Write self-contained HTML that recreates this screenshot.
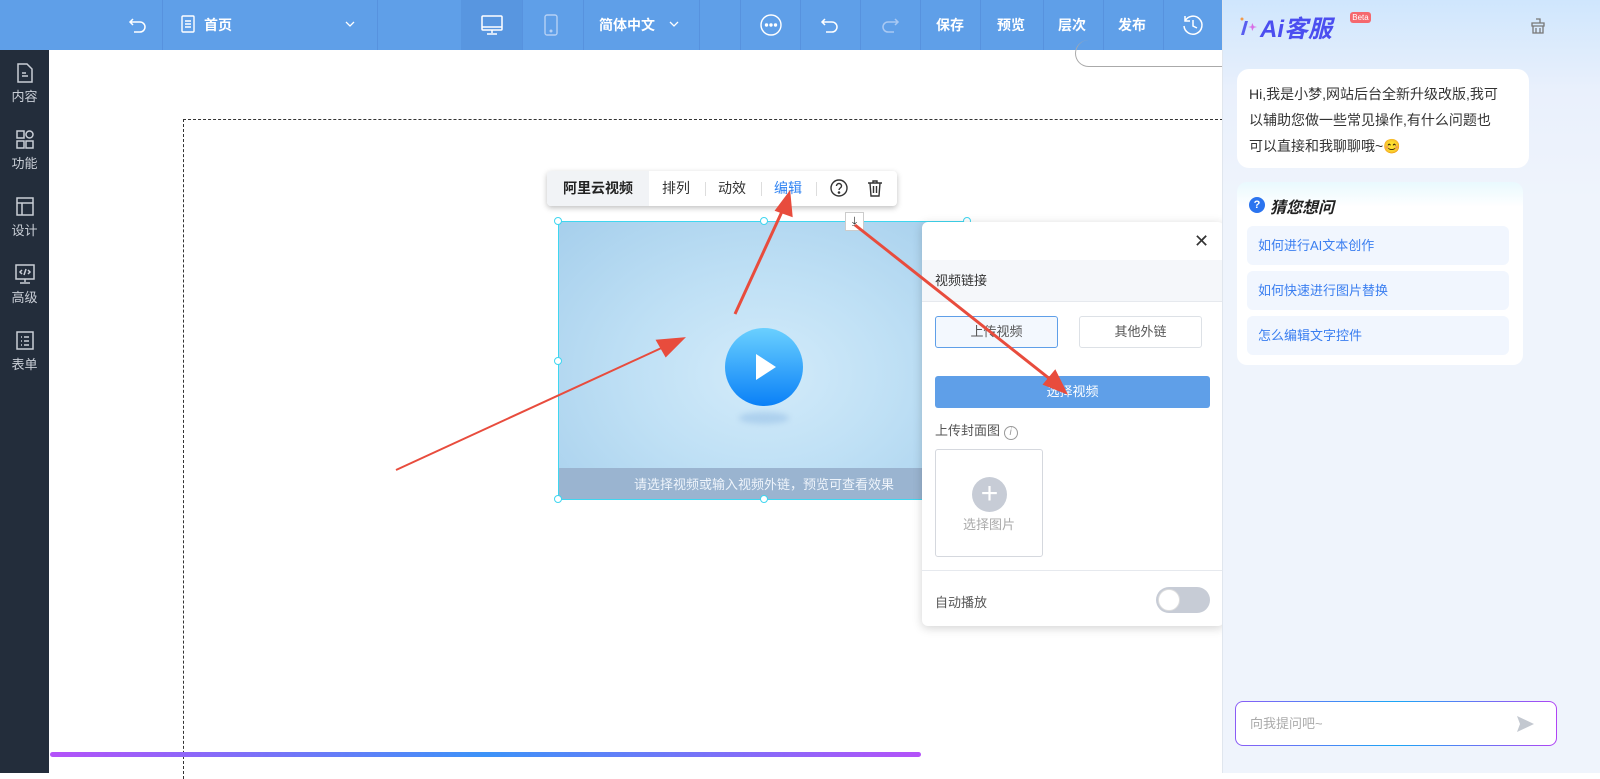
<!DOCTYPE html>
<html><head><meta charset="utf-8"><style>
*{box-sizing:border-box;margin:0;padding:0}
body{width:1600px;height:773px;overflow:hidden;position:relative;background:#fff;font-family:"Liberation Sans","Noto Sans CJK SC",sans-serif;font-size:14px;color:#333}
.abs{position:absolute}
.top{left:0;top:0;width:1222px;height:50px;background:#5f9fe8}
.div{position:absolute;top:0;width:1px;height:50px;background:#5792de}
.tt{position:absolute;top:0;height:50px;line-height:50px;color:#fff;font-size:14px;font-weight:bold}
.side{left:0;top:50px;width:49px;height:723px;background:#232d3b}
.si{position:absolute;left:0;width:49px;text-align:center;color:#c9ced6;font-size:13px}
.si svg{display:block;margin:0 auto 2px}
.right{left:1222px;top:0;width:378px;height:773px;background:linear-gradient(180deg,#cfe6fd 0,#e9f0fc 90px,#eff4fc 200px,#eff4fc 100%);border-left:1px solid #e0e6ee}
.q{position:absolute;left:1247px;width:262px;height:39px;background:#f1f6fe;border-radius:6px;color:#3a7ef0;font-size:13px;line-height:39px;padding-left:11px}
</style></head><body>
<div class="abs top">
 <div class="div" style="left:162px"></div><div class="div" style="left:377px"></div>
 <div class="abs" style="left:461px;top:0;width:61px;height:50px;background:#5896e0"></div>
 <div class="div" style="left:522px"></div><div class="div" style="left:583px"></div><div class="div" style="left:699px"></div><div class="div" style="left:740px"></div><div class="div" style="left:800px"></div><div class="div" style="left:860px"></div><div class="div" style="left:920px"></div><div class="div" style="left:980px"></div><div class="div" style="left:1043px"></div><div class="div" style="left:1103px"></div><div class="div" style="left:1163px"></div>
 <svg class="abs" style="left:128px;top:15px" width="20" height="20" viewBox="0 0 20 20" fill="none" stroke="#fff" stroke-width="1.5"><path d="M5 4 2 7l3 3M2 7h10a5 5 0 010 10H6"/></svg>
 <svg class="abs" style="left:180px;top:14px" width="16" height="20" viewBox="0 0 16 20" fill="none" stroke="#fff" stroke-width="1.4"><rect x="2" y="2" width="12" height="16" rx="1"/><path d="M5 7h6M5 10h6M5 13h6"/></svg>
 <div class="tt" style="left:204px">首页</div>
 <svg class="abs" style="left:344px;top:19px" width="12" height="10" viewBox="0 0 12 10" fill="none" stroke="#fff" stroke-width="1.3"><path d="M2 3l4 4 4-4"/></svg>
 <svg class="abs" style="left:480px;top:14px" width="24" height="22" viewBox="0 0 24 22" fill="none" stroke="#fff" stroke-width="1.5"><rect x="2" y="2" width="20" height="14" rx="1"/><path d="M2 13h20M12 16v3M7 20h10"/></svg>
 <svg class="abs" style="left:543px;top:13px" width="16" height="24" viewBox="0 0 16 24" fill="none" stroke="#b5d1f5" stroke-width="1.4"><rect x="2" y="2" width="12" height="20" rx="2"/><circle cx="8" cy="18" r="0.8"/></svg>
 <div class="tt" style="left:599px">简体中文</div>
 <svg class="abs" style="left:668px;top:19px" width="12" height="10" viewBox="0 0 12 10" fill="none" stroke="#fff" stroke-width="1.3"><path d="M2 3l4 4 4-4"/></svg>
 <svg class="abs" style="left:759px;top:13px" width="24" height="24" viewBox="0 0 24 24" fill="none" stroke="#fff" stroke-width="1.4"><circle cx="12" cy="12" r="10"/><circle cx="7.5" cy="12" r="1" fill="#fff"/><circle cx="12" cy="12" r="1" fill="#fff"/><circle cx="16.5" cy="12" r="1" fill="#fff"/></svg>
 <svg class="abs" style="left:820px;top:15px" width="20" height="20" viewBox="0 0 20 20" fill="none" stroke="#fff" stroke-width="1.5"><path d="M5 4 2 7l3 3M2 7h10a5 5 0 010 10H6"/></svg>
 <svg class="abs" style="left:880px;top:15px" width="20" height="20" viewBox="0 0 20 20" fill="none" stroke="#a9c9f3" stroke-width="1.5"><path d="M15 4l3 3-3 3M18 7H8a5 5 0 000 10h6"/></svg>
 <div class="tt" style="left:936px">保存</div><div class="tt" style="left:997px">预览</div><div class="tt" style="left:1058px">层次</div><div class="tt" style="left:1118px">发布</div>
 <svg class="abs" style="left:1181px;top:13px" width="24" height="24" viewBox="0 0 24 24" fill="none" stroke="#fff" stroke-width="1.5"><path d="M4 8a9 9 0 11-1 5"/><path d="M4 3v5h5"/><path d="M12 7v6l4 2"/></svg>
</div>
<div class="abs side">
 <div class="si" style="top:12px"><svg width="20" height="22" viewBox="0 0 20 22" fill="none" stroke="#c9ced6" stroke-width="1.5"><path d="M3 2h9l5 5v13H3z"/><path d="M7 11h4M7 14h6"/></svg>内容</div>
 <div class="si" style="top:79px"><svg width="20" height="22" viewBox="0 0 20 22" fill="none" stroke="#c9ced6" stroke-width="1.5"><rect x="2" y="2" width="7" height="7"/><circle cx="14.5" cy="5.5" r="3.5"/><rect x="2" y="12" width="7" height="7"/><rect x="11" y="12" width="7" height="7"/></svg>功能</div>
 <div class="si" style="top:146px"><svg width="20" height="22" viewBox="0 0 20 22" fill="none" stroke="#c9ced6" stroke-width="1.5"><rect x="2" y="2" width="16" height="17"/><path d="M2 7h16M7 7v12"/></svg>设计</div>
 <div class="si" style="top:213px"><svg width="22" height="22" viewBox="0 0 22 22" fill="none" stroke="#c9ced6" stroke-width="1.5"><rect x="2" y="2" width="18" height="14"/><path d="M11 16v3M6 20h10M8 7l-2 2 2 2M14 7l2 2-2 2M12 6l-2 6"/></svg>高级</div>
 <div class="si" style="top:280px"><svg width="20" height="22" viewBox="0 0 20 22" fill="none" stroke="#c9ced6" stroke-width="1.5"><rect x="2" y="2" width="16" height="17"/><path d="M6 7h1M9 7h5M6 11h1M9 11h5M6 15h1M9 15h5"/></svg>表单</div>
</div>
<div class="abs" style="left:1075px;top:40px;width:160px;height:27px;border:1px solid #aaa;border-radius:14px;border-top:none"></div>
<div class="abs" style="left:183px;top:119px;width:1045px;height:660px;border:1px dashed #333;border-right:none;border-bottom:none"></div>
<div class="abs" style="left:547px;top:171px;width:350px;height:35px;background:#fff;border-radius:4px;box-shadow:0 2px 6px rgba(0,0,0,.25)">
 <div class="abs" style="left:0;top:0;width:102px;height:35px;background:#f1f3f6;border-radius:4px 0 0 4px;line-height:35px;text-align:center;font-weight:bold;color:#222">阿里云视频</div>
 <div class="abs" style="left:115px;line-height:35px">排列</div>
 <div class="abs" style="left:171px;line-height:35px">动效</div>
 <div class="abs" style="left:227px;line-height:35px;color:#2f83f2">编辑</div>
 <div class="abs" style="left:158px;top:11px;width:1px;height:14px;background:#ddd"></div><div class="abs" style="left:214px;top:11px;width:1px;height:14px;background:#ddd"></div><div class="abs" style="left:269px;top:11px;width:1px;height:14px;background:#ddd"></div>
 <svg class="abs" style="left:282px;top:7px" width="20" height="20" viewBox="0 0 20 20" fill="none" stroke="#333" stroke-width="1.4"><circle cx="10" cy="10" r="8"/><path d="M7.5 8a2.5 2.5 0 115 0c0 2-2.5 2-2.5 4"/><circle cx="10" cy="14.5" r=".6" fill="#333"/></svg>
 <svg class="abs" style="left:318px;top:7px" width="20" height="20" viewBox="0 0 20 20" fill="none" stroke="#333" stroke-width="1.4"><path d="M3 5h14M8 5V3h4v2M5 5l1 13h8l1-13M8.5 8v7M11.5 8v7"/></svg>
</div>
<div class="abs" style="left:558px;top:221px;width:410px;height:279px;border:1px solid #3fd6f0;background:radial-gradient(ellipse at 50% 55%,#d3ebfa 0,#bfe0f5 45%,#a6cfec 100%);overflow:hidden">
 <div class="abs" style="left:166px;top:106px;width:78px;height:78px;border-radius:50%;background:linear-gradient(180deg,#6ad0ff,#0a80f7)"></div>
 <svg class="abs" style="left:196px;top:131px" width="22" height="28" viewBox="0 0 22 28"><path d="M1 1l20 13L1 27z" fill="#fff"/></svg>
 <div class="abs" style="left:180px;top:190px;width:50px;height:12px;border-radius:50%;background:rgba(120,170,220,.35);filter:blur(3px)"></div>
 <div class="abs" style="left:0;top:246px;width:410px;height:33px;background:#9ab4d0;color:#eef4fb;font-size:13px;line-height:33px;text-align:center">请选择视频或输入视频外链，预览可查看效果</div>
</div>
<div class="abs" style="left:845px;top:212px;width:19px;height:19px;background:#fff;border:1px solid #ccc;text-align:center;font-size:12px;line-height:17px">⤓</div>
<div class="abs" style="left:554px;top:217px;width:8px;height:8px;border:1px solid #3fd6f0;border-radius:50%;background:#fff"></div>
<div class="abs" style="left:760px;top:217px;width:8px;height:8px;border:1px solid #3fd6f0;border-radius:50%;background:#fff"></div>
<div class="abs" style="left:963px;top:217px;width:8px;height:8px;border:1px solid #3fd6f0;border-radius:50%;background:#fff"></div>
<div class="abs" style="left:554px;top:357px;width:8px;height:8px;border:1px solid #3fd6f0;border-radius:50%;background:#fff"></div>
<div class="abs" style="left:554px;top:495px;width:8px;height:8px;border:1px solid #3fd6f0;border-radius:50%;background:#fff"></div>
<div class="abs" style="left:760px;top:495px;width:8px;height:8px;border:1px solid #3fd6f0;border-radius:50%;background:#fff"></div>
<div class="abs" style="left:922px;top:222px;width:302px;height:404px;background:#fff;border-radius:6px;box-shadow:0 2px 10px rgba(0,0,0,.18)">
 <div class="abs" style="left:272px;top:9px;font-size:18px;color:#333">✕</div>
 <div class="abs" style="left:0;top:38px;width:302px;height:42px;background:#f5f7fa;border-bottom:1px solid #e6e9ee;line-height:42px;padding-left:13px;font-size:13px">视频链接</div>
 <div class="abs" style="left:13px;top:94px;width:123px;height:32px;border:1px solid #5f9fe8;background:#f3f8fe;border-radius:3px;text-align:center;line-height:30px;font-size:13px;color:#555">上传视频</div>
 <div class="abs" style="left:157px;top:94px;width:123px;height:32px;border:1px solid #dde1e6;border-radius:3px;text-align:center;line-height:30px;font-size:13px;color:#555">其他外链</div>
 <div class="abs" style="left:13px;top:154px;width:275px;height:32px;background:#5f9fe8;border-radius:3px;text-align:center;line-height:32px;font-size:13px;color:#fff">选择视频</div>
 <div class="abs" style="left:13px;top:198px;font-size:13px;color:#555">上传封面图 <span style="display:inline-block;width:14px;height:14px;border:1px solid #999;border-radius:50%;font-size:10px;line-height:12px;text-align:center;color:#999;font-style:italic">i</span></div>
 <div class="abs" style="left:13px;top:227px;width:108px;height:108px;border:1px solid #d5d8de;border-radius:3px">
  <div class="abs" style="left:36px;top:27px;width:35px;height:35px;border-radius:50%;background:#c7ccd6;color:#fff;text-align:center;line-height:33px;font-size:30px">+</div>
  <div class="abs" style="left:0;top:64px;width:106px;text-align:center;font-size:13px;color:#aaa">选择图片</div>
 </div>
 <div class="abs" style="left:0;top:348px;width:302px;height:1px;background:#e6e9ee"></div>
 <div class="abs" style="left:13px;top:370px;font-size:13px;color:#555">自动播放</div>
 <div class="abs" style="left:234px;top:365px;width:54px;height:26px;border-radius:13px;background:#c7ccd6"><div class="abs" style="left:2px;top:2px;width:22px;height:22px;border-radius:50%;background:#fff;border:1px solid #ddd"></div></div>
</div>
<svg class="abs" style="left:0;top:0" width="1222" height="773">
 <g stroke="#e84c3d" stroke-width="3" fill="#e84c3d">
  <line x1="396" y1="470" x2="668" y2="345" stroke-width="2"/><path d="M682 339l-24 2 8 14z"/>
  <line x1="735" y1="314" x2="785" y2="205"/><path d="M789 194l-12 16 14 5z"/>
  <line x1="855" y1="225" x2="1055" y2="383"/><path d="M1065 392l-10-20-10 12z"/>
 </g>
</svg>
<div class="abs" style="left:50px;top:752px;width:871px;height:5px;border-radius:3px;background:linear-gradient(90deg,#b452f9,#3c93f8 50%,#b452f9)"></div>
<div class="abs right">
 <svg class="abs" style="left:14px;top:15px" width="24" height="24" viewBox="0 0 24 24"><path d="M4 6l3 0-4 14h-3z" fill="#5a5ef0" transform="translate(4 0)"/><path d="M15 6l2 4 4 1-4 1-2 4-1-4-4-1 4-1z" fill="#d86de6" transform="scale(.8) translate(4 4)"/><circle cx="5" cy="4" r="1.5" fill="#f39a4a"/></svg>
 <div class="abs" style="left:37px;top:9px;font-size:24px;font-weight:bold;font-style:italic;color:#4b4ef0">Ai客服</div>
 <div class="abs" style="left:127px;top:12px;width:21px;height:11px;background:#f5686e;border-radius:3px;color:#fff;font-size:8px;line-height:11px;text-align:center">Beta</div>
 <svg class="abs" style="left:306px;top:17px" width="18" height="18" viewBox="0 0 18 18" fill="none" stroke="#777" stroke-width="1.3"><path d="M7 2h4v4M3 6h12v3H3zM4 9v7h10V9M7 11v5M11 11v5"/></svg>
 <div class="abs" style="left:14px;top:69px;width:292px;height:99px;background:#fff;border-radius:12px;padding:12px 12px;font-size:14px;line-height:26px;color:#333;white-space:nowrap">Hi,我是小梦,网站后台全新升级改版,我可<br>以辅助您做一些常见操作,有什么问题也<br>可以直接和我聊聊哦~😊</div>
 <div class="abs" style="left:14px;top:182px;width:286px;height:183px;background:linear-gradient(180deg,#e9f9fe 0,#fff 25px);border-radius:10px"></div>
 <div class="abs" style="left:26px;top:197px;width:16px;height:16px;border-radius:50%;background:#2b74ef;color:#fff;font-size:11px;font-weight:bold;text-align:center;line-height:16px">?</div>
 <div class="abs" style="left:47px;top:194px;font-size:16px;font-weight:bold;font-style:italic;color:#222">猜您想问</div>
</div>
<div class="q" style="top:226px">如何进行AI文本创作</div>
<div class="q" style="top:271px">如何快速进行图片替换</div>
<div class="q" style="top:316px">怎么编辑文字控件</div>
<div class="abs" style="left:1235px;top:701px;width:322px;height:45px;border-radius:8px;padding:1px;background:linear-gradient(90deg,#8a5cf6,#1aa6f5 50%,#b044f4)"><div style="width:100%;height:100%;background:#fff;border-radius:7px;padding-left:14px;line-height:43px;color:#aaa;font-size:13px">向我提问吧~</div></div>
<svg class="abs" style="left:1516px;top:715px" width="19" height="18" viewBox="0 0 19 18"><path d="M1 1l17 8-17 8 3-8z" fill="#c3c8d0"/></svg>
</body></html>
